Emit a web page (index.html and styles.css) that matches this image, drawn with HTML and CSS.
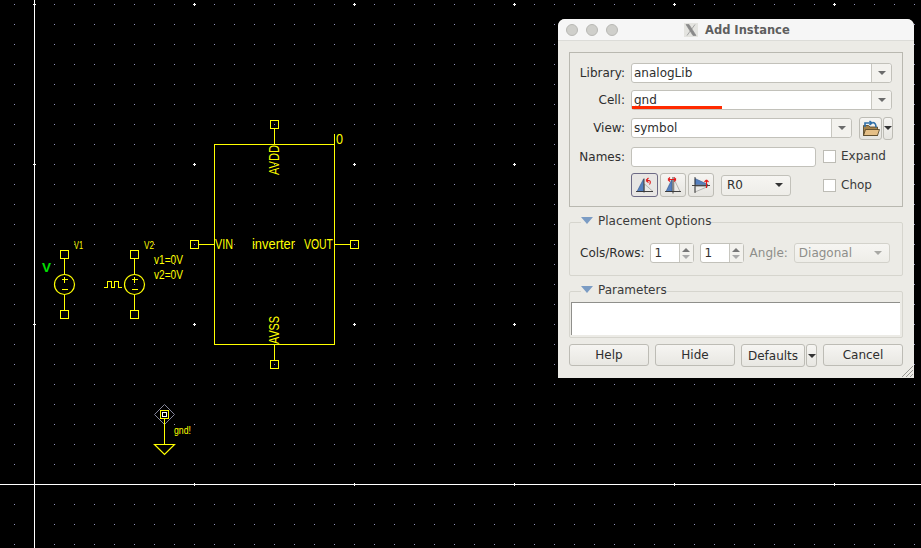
FILE: index.html
```html
<!DOCTYPE html>
<html lang="en">
<head>
<meta charset="utf-8">
<title>Add Instance</title>
<link rel="stylesheet" href="styles.css">
</head>
<body>
<main class="desktop">
<svg class="canvas" width="921" height="548" viewBox="0 0 921 548">
  <defs>
    <pattern id="dots" patternUnits="userSpaceOnUse" x="14" y="4" width="20" height="20">
      <rect class="dot" width="1" height="1"/>
    </pattern>
    <pattern id="majors" patternUnits="userSpaceOnUse" x="33" y="3" width="160" height="160">
      <rect class="major" x="0" y="1" width="3" height="1"/>
      <rect class="major" x="1" y="0" width="1" height="3"/>
    </pattern>
  </defs>
  <rect class="bg" width="921" height="548"/>
  <rect width="921" height="548" fill="url(#dots)"/>
  <rect width="921" height="548" fill="url(#majors)"/>
  <path class="axis" d="M34.5 0V548M0 484.5H921"/>

  <g class="wire">
    <rect x="214.5" y="144.5" width="120" height="200"/>
    <path d="M274.5 128.500V144.500M274.500 344.500V360.500M198.500 244.500H214.500M334.500 244.500H350.500M334.500 134V144"/>
    <rect x="270.500" y="120.500" width="8" height="8"/>
    <rect x="270.500" y="360.500" width="8" height="8"/>
    <rect x="190.500" y="240.500" width="8" height="8"/>
    <rect x="350.500" y="240.500" width="8" height="8"/>

    <rect x="60.500" y="250.500" width="8" height="8"/>
    <rect x="60.500" y="310.500" width="8" height="8"/>
    <path d="M64.500 258.500V274M64.500 294.500V310.500M61.500 279.500H67.500M64.500 276.500V282.500M61.500 289.500H67.500"/>
    <circle class="round" cx="64.500" cy="284.500" r="10"/>

    <rect x="130.500" y="250.500" width="8" height="8"/>
    <rect x="130.500" y="310.500" width="8" height="8"/>
    <path d="M134.500 258.500V274M134.500 294.500V310.500M131.500 279.500H137.500M134.500 276.500V282.500M131.500 289.500H137.500"/>
    <circle class="round" cx="134.500" cy="284.500" r="10"/>
    <path d="M103.500 287.500H107.500V281.500H111.500V287.500H114.500V281.500H118.500V287.500H121.500"/>

    <path class="diamond" d="M164.500 404.500L174.500 414.500L164.500 424.500L154.500 414.500Z"/>
    <rect x="160.500" y="410.500" width="8" height="8"/>
    <rect class="inner" x="162.500" y="412.500" width="4" height="4"/>
    <path d="M164.500 418.500V444.500"/>
    <path class="round" d="M154.500 444.500H174.500L164.500 454.500Z"/>
  </g>

  <g class="label">
    <text x="336" y="144" textLength="7" lengthAdjust="spacingAndGlyphs">0</text>
    <text x="215" y="249" textLength="18" lengthAdjust="spacingAndGlyphs">VIN</text>
    <text x="252" y="249" textLength="43" lengthAdjust="spacingAndGlyphs">inverter</text>
    <text x="304" y="249" textLength="29" lengthAdjust="spacingAndGlyphs">VOUT</text>
    <text x="-175" y="279" transform="rotate(-90)" textLength="30" lengthAdjust="spacingAndGlyphs">AVDD</text>
    <text x="-344" y="279" transform="rotate(-90)" textLength="28" lengthAdjust="spacingAndGlyphs">AVSS</text>
  </g>
  <g class="label small">
    <text x="74" y="249" textLength="9" lengthAdjust="spacingAndGlyphs">V1</text>
    <text x="144" y="249" textLength="10" lengthAdjust="spacingAndGlyphs">V2</text>
    <text class="param" x="154" y="264" textLength="29" lengthAdjust="spacingAndGlyphs">v1=0V</text>
    <text class="param" x="154" y="279" textLength="29" lengthAdjust="spacingAndGlyphs">v2=0V</text>
    <text x="174" y="434" textLength="17" lengthAdjust="spacingAndGlyphs">gnd!</text>
  </g>
  <text class="model" x="42" y="272" textLength="9" lengthAdjust="spacingAndGlyphs">V</text>
</svg>

<section class="dialog">
  <header class="titlebar">
    <div class="lights"><i class="light"></i><i class="light"></i><i class="light"></i></div>
    <div class="title">
      <svg class="x-icon" width="14" height="14" viewBox="0 0 14 14"><rect class="x-bg" width="14" height="14"/><path class="x-glyph" d="M2 1.500H5L12 12.500H9ZM11 1.500L3 12.500"/></svg>
      <span>Add Instance</span>
    </div>
  </header>

  <div class="body">
    <div class="group main-group">
      <div class="form-grid">
        <label class="lbl">Library:</label>
        <div class="combo wide"><span class="value">analogLib</span><span class="drop"><i class="arrow"></i></span></div>
        <label class="lbl">Cell:</label>
        <div class="combo wide"><span class="value">gnd</span><span class="drop"><i class="arrow"></i></span><i class="redline"></i></div>
        <label class="lbl">View:</label>
        <div class="view-row">
          <div class="combo view"><span class="value">symbol</span><span class="drop"><i class="arrow"></i></span></div>
          <button class="tool folder">
            <svg width="18" height="17" viewBox="0 0 18 17">
              <path class="folder-back" d="M1.500 5.500H6.500L8 7H15.500V15.500H1.500Z"/>
              <path class="folder-front" d="M3.500 9.500H17.500L15.500 15.500H1.500Z"/>
              <path class="folder-arrow" d="M3 7V3H9.500M7.500 1L10 3L7.500 5M10.500 2.500C13 2.500 14 4.500 14 7.500"/>
            </svg>
          </button>
          <button class="tool tiny"><i class="arrow dark"></i></button>
        </div>
        <label class="lbl">Names:</label>
        <div class="names-row">
          <input class="field names" type="text" aria-label="Names">
          <span class="check-line"><i class="check"></i>Expand</span>
        </div>
        <span></span>
        <div class="tools-row">
          <div class="tool-set">
            <button class="tool orient active">
              <svg width="20" height="18" viewBox="0 0 20 18">
                <path class="tri-blue" d="M2 15.500L8.500 3V15.500Z"/><path class="tri-grey" d="M9.500 8L18 15.500H9.500Z"/>
                <path class="red" d="M11 4.500L13.500 2M11 4.500L13.500 6.500M11.500 4.500H14C15.500 4.500 15.800 7 14.500 8.500"/>
                <path class="axis-ink" d="M9 2.500V16.500M1 15.500H18"/>
              </svg>
            </button>
            <button class="tool orient">
              <svg width="20" height="18" viewBox="0 0 20 18">
                <path class="tri-blue" d="M3 15.500L9 3V15.500Z"/><path class="tri-grey" d="M11 3L17 15.500H11Z"/>
                <path class="axis-ink" d="M10 1V17.500M2 15.500H18"/>
                <path class="red" d="M5 3.500H13M5 3.500L7 1.500M5 3.500L7 5.500M13 3.500L11 1.500M13 3.500L11 5.500"/>
              </svg>
            </button>
            <button class="tool orient">
              <svg width="20" height="18" viewBox="0 0 20 18">
                <path class="tri-blue" d="M4 2.500L17 8.500H4Z"/><path class="tri-grey" d="M4 10.500H17L4 16Z"/>
                <path class="axis-ink" d="M1 9.500H19M4 1V17"/>
                <path class="red" d="M15.500 4V12M15.500 4L13.500 6M15.500 4L17.500 6"/>
              </svg>
            </button>
          </div>
          <div class="combo raised r0"><span class="value">R0</span><span class="plain-drop"><i class="arrow dark"></i></span></div>
          <span class="check-line chop"><i class="check"></i>Chop</span>
        </div>
      </div>
    </div>

    <fieldset class="group titled placement">
      <legend class="legend"><i class="disclosure"></i>Placement Options</legend>
      <div class="placement-row">
        <span class="lbl-inline">Cols/Rows:</span>
        <div class="spin"><span class="value">1</span><span class="spin-btns"><i class="up"></i><i class="down"></i></span></div>
        <div class="spin"><span class="value">1</span><span class="spin-btns"><i class="up"></i><i class="down"></i></span></div>
        <span class="lbl-inline muted">Angle:</span>
        <div class="combo raised angle"><span class="value muted">Diagonal</span><span class="plain-drop"><i class="arrow pale"></i></span></div>
      </div>
    </fieldset>

    <fieldset class="group titled params">
      <legend class="legend"><i class="disclosure"></i>Parameters</legend>
      <div class="param-area"></div>
    </fieldset>

    <div class="actions">
      <button class="btn">Help</button>
      <button class="btn">Hide</button>
      <div class="split">
        <button class="btn defaults">Defaults</button>
        <button class="btn more"><i class="arrow dark"></i></button>
      </div>
      <button class="btn">Cancel</button>
    </div>
  </div>
  <svg class="grip" width="14" height="14" viewBox="0 0 14 14"><path d="M13 2L2 13M13 6L6 13M13 10L10 13"/></svg>
</section>
</main>
</body>
</html>
```

FILE: styles.css
```css
* { box-sizing: border-box; }
html, body { margin: 0; padding: 0; background: #000; }
body { width: 921px; height: 548px; overflow: hidden; font-family: "DejaVu Sans", sans-serif; font-size: 12px; color: #2e2e2e; }
.desktop { position: relative; width: 921px; height: 548px; }

/* schematic canvas */
.canvas { display: block; }
.bg { fill: #000; }
.dot { fill: #9494b8; }
.major { fill: #fff; }
.axis { stroke: #fff; stroke-width: 1; fill: none; shape-rendering: crispEdges; }
.wire rect, .wire path { fill: none; stroke: #ffff00; stroke-width: 1; shape-rendering: crispEdges; }
.wire .round { fill: none; stroke: #ffff00; stroke-width: 1.2; shape-rendering: auto; }
.wire .diamond { stroke: #85859a; shape-rendering: auto; }
.wire .inner { stroke: #fff; }
.label text { fill: #ffff00; font-family: "Liberation Sans", sans-serif; font-size: 15px; font-weight: 400; }
.label.small text { font-size: 11px; }
.label.small .param { font-size: 12px; }
.model { fill: #00e000; font-family: "Liberation Sans", sans-serif; font-size: 12px; font-weight: 700; }

/* dialog window */
.dialog { position: absolute; left: 558px; top: 19px; width: 356px; height: 359px; background: #ecebe6; border-radius: 7px 7px 0 0; overflow: hidden; }
.titlebar { position: relative; height: 22px; background: #f6f6f6; display: flex; align-items: center; border-bottom: 1px solid #dcdcd8; }
.lights { display: flex; gap: 8px; padding-left: 8px; }
.light { width: 12px; height: 12px; border-radius: 50%; background: #cfcfcb; border: 1px solid #b8b8b4; }
.title { position: absolute; left: 126px; top: 4px; display: flex; align-items: center; gap: 7px; font-size: 11.5px; font-weight: 700; color: #5e5e5e; line-height: 14px; }
.x-bg { fill: #e4e4e0; }
.x-glyph { fill: #8a8a8a; stroke: #8a8a8a; stroke-width: .7; }
.x-icon { display: block; }

.body { padding: 11px 11px 0 11px; display: flex; flex-direction: column; }
.group { margin: 0; border: 1px solid #b9b8b0; }
.main-group { height: 155px; padding: 10px 10px 0 10px; }
.form-grid { display: grid; grid-template-columns: 45px 261px; column-gap: 6px; grid-template-rows: 27px 28px 29px 26px 24px; align-items: start; }
.lbl { display: flex; align-items: center; justify-content: flex-end; height: 20px; line-height: 18px; white-space: nowrap; }

.combo { position: relative; display: flex; align-items: stretch; height: 20px; background: #fff; border: 1px solid #c2c1ba; border-radius: 3px; }
.value { flex: 1; padding-left: 2px; line-height: 19px; color: #2e2e2e; }
.drop { width: 20px; border-left: 1px solid #c8c7c0; background: #f3f2ee; display: flex; align-items: center; justify-content: center; border-radius: 0 3px 3px 0; }
.arrow { display: block; width: 0; height: 0; border-left: 4px solid transparent; border-right: 4px solid transparent; border-top: 4px solid #6b6b6b; }
.arrow.dark { border-top-color: #333; }
.arrow.pale { border-top-color: #a8a8a4; }
.redline { position: absolute; left: 0; top: 15px; width: 90px; height: 3px; background: #ff2a00; }

.view-row { display: flex; align-items: center; height: 20px; }
.view { width: 221px; flex: none; }
.tool { padding: 0; margin: 0; display: flex; align-items: center; justify-content: center; border: 1px solid #bdbcb5; border-radius: 3px; background: linear-gradient(#f6f5f2, #e6e5e0); }
.folder { width: 23px; height: 23px; margin-left: 7px; flex: none; }
.tiny { width: 10px; height: 23px; margin-left: 1px; flex: none; }
.folder-back { fill: #a5824a; stroke: #4c3d20; stroke-width: .8; }
.folder-front { fill: #e5bf86; stroke: #4c3d20; stroke-width: .8; }
.folder-arrow { fill: none; stroke: #2f6fa8; stroke-width: 1.6; }

.names-row { display: flex; align-items: center; height: 20px; }
.names-row .check-line { margin-top: -2px; }
.field { padding: 0; height: 20px; background: #fff; border: 1px solid #c2c1ba; border-radius: 3px; }
.names { width: 185px; flex: none; }
.check-line { display: flex; align-items: center; gap: 5px; margin-left: 7px; color: #3a3a3a; }
.check { display: block; width: 13px; height: 13px; background: #fff; border: 1px solid #bdbcb5; }

.tools-row { display: flex; align-items: center; height: 24px; }
.tool-set { display: flex; gap: 2px; }
.orient { width: 26px; height: 24px; }
.orient.active { width: 27px; border-color: #6d6a85; background: #e8e6e4; }
.tri-blue { fill: #5580c0; stroke: #2b4a7d; stroke-width: .5; }
.tri-grey { fill: #ecebe8; stroke: #9a9a96; stroke-width: .7; }
.axis-ink { fill: none; stroke: #333; stroke-width: .9; }
.red { fill: none; stroke: #e01818; stroke-width: 1.1; }
.raised { background: linear-gradient(#f6f5f2, #eeede8); height: 21px; }
.r0 { width: 70px; margin-left: 7px; flex: none; }
.plain-drop { width: 22px; display: flex; align-items: center; justify-content: center; }
.r0 .value { padding-left: 5px; }
.chop { margin-left: 32px; }

/* titled groups */
.titled { padding: 0; border-color: #d6d5ce; border-radius: 2px; }
.legend { display: flex; align-items: flex-start; padding: 1px 0 3px; margin-left: 11px; height: 18px; line-height: 14px; color: #3a3a3a; }
.disclosure { display: block; width: 0; height: 0; margin: 3px 5px 0 0; border-left: 6px solid transparent; border-right: 6px solid transparent; border-top: 7px solid #7b9cc4; }
.placement { margin-top: 6px; height: 63px; }
.placement-row { display: flex; align-items: center; height: 20px; margin-top: 12px; padding-left: 10px; }
.lbl-inline { line-height: 18px; }
.muted { color: #8e8e8a; }
.spin { display: flex; width: 44px; height: 20px; margin-left: 5px; background: #fff; border: 1px solid #c2c1ba; border-radius: 3px; flex: none; }
.spin + .spin { margin-left: 6px; }
.spin .value { padding-left: 4px; }
.spin-btns { width: 14px; border-left: 1px solid #c8c7c0; background: #f3f2ee; display: flex; flex-direction: column; align-items: center; justify-content: center; gap: 3px; }
.up { display: block; width: 0; height: 0; border-left: 4px solid transparent; border-right: 4px solid transparent; border-bottom: 4px solid #777; }
.down { display: block; width: 0; height: 0; border-left: 4px solid transparent; border-right: 4px solid transparent; border-top: 4px solid #aaa; }
.lbl-inline.muted { margin-left: 6px; }
.angle { width: 96px; height: 20px; margin-left: 6px; border-color: #d3d2cb; flex: none; }
.angle .value { padding-left: 4px; }
.params { margin-top: 6px; height: 56px; }
.param-area { height: 33px; margin: 2px 2px 0 1px; background: #fff; border-top: 1px solid #8f8f8b; border-left: 1px solid #8f8f8b; }

.actions { display: flex; gap: 6px; margin-top: 6px; }
.btn { width: 80px; height: 22px; padding: 0; font: inherit; color: #2e2e2e; border: 1px solid #bdbcb5; border-radius: 3px; background: linear-gradient(#f6f5f2, #e8e7e2); display: flex; align-items: center; justify-content: center; }
.split { display: flex; gap: 1px; height: 23px; }
.defaults { width: 64px; height: 23px; }
.more { width: 11px; height: 23px; }
.grip { position: absolute; right: 0; bottom: 0; }
.grip path { fill: none; stroke: #9a9a96; stroke-width: 1; }
```
